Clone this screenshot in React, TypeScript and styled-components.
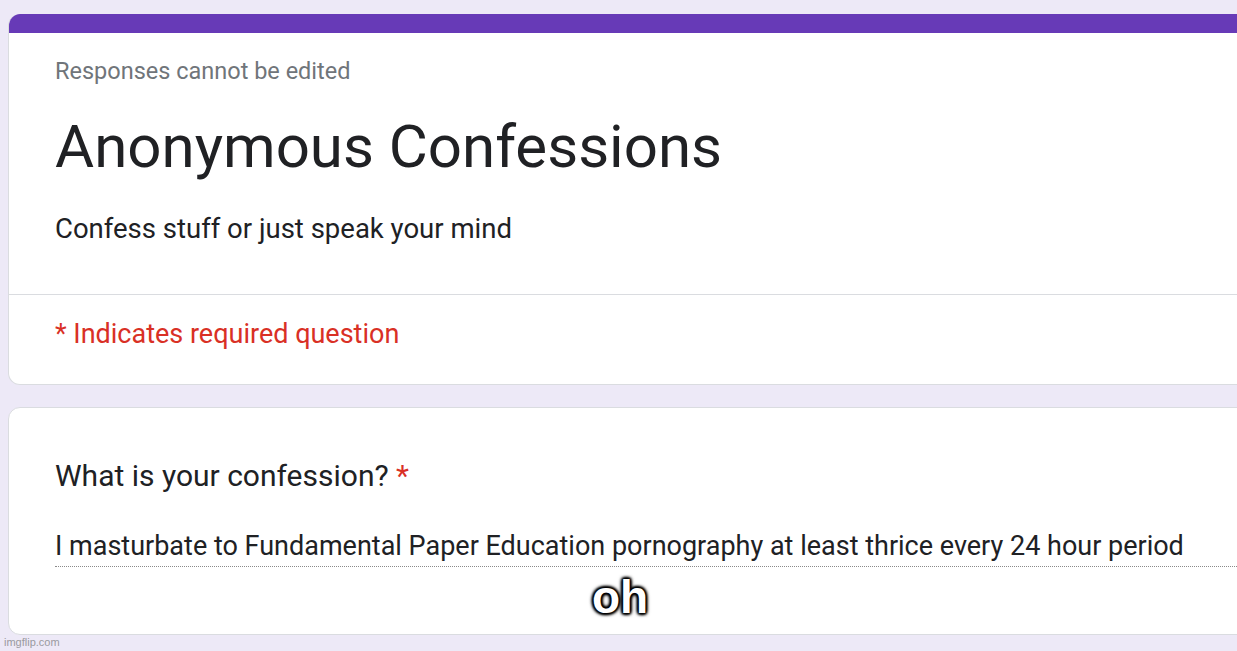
import React from 'react'
import styled, { createGlobalStyle } from 'styled-components';

const GlobalStyle = createGlobalStyle`
  html, body {
    margin: 0;
    padding: 0;
    background: #ede9f7;
    overflow: hidden;
  }
  body {
    font-family: Roboto, "Liberation Sans", Arial, sans-serif;
  }
`;

const App = () => {
  return (
    <>
      <GlobalStyle />
      <Page>
        <HeaderCard>
          <AccentBar />
          <HeaderBody>
            <Notice>Responses cannot be edited</Notice>
            <Title>Anonymous Confessions</Title>
            <Description>Confess stuff or just speak your mind</Description>
          </HeaderBody>
          <Divider />
          <RequiredNote>* Indicates required question</RequiredNote>
        </HeaderCard>
        <QuestionCard>
          <QuestionTitle>
            What is your confession? <Star>*</Star>
          </QuestionTitle>
          <Answer>
            I masturbate to Fundamental Paper Education pornography at least thrice every 24 hour period
          </Answer>
          <Caption>oh</Caption>
        </QuestionCard>
        <Watermark>imgflip.com</Watermark>
      </Page>
    </>
  )
}

const Page = styled.div`
  width: 1237px;
  height: 651px;
  padding: 14px 0 0 8px;
  box-sizing: border-box;
  display: flex;
  flex-direction: column;
  gap: 22px;
  position: relative;
`;

const Card = styled.div`
  width: 1260px;
  background: #fff;
  border: 1px solid #dadce0;
  border-radius: 12px;
  box-sizing: border-box;
  overflow: hidden;
`;

const HeaderCard = styled(Card)`
  height: 371px;
  border-top: none;
`;

const AccentBar = styled.div`
  height: 19px;
  background: #673ab7;
`;

const HeaderBody = styled.div`
  padding: 25px 46px 0;
  height: 261px;
  box-sizing: border-box;
`;

const Notice = styled.div`
  font-size: 23.5px;
  color: #70757a;
  line-height: 26px;
`;

const Title = styled.h1`
  margin: 27px 0 0;
  font-size: 60px;
  font-weight: 400;
  line-height: 72px;
  color: #202124;
`;

const Description = styled.div`
  margin-top: 30px;
  font-size: 27.5px;
  line-height: 32px;
  color: #202124;
`;

const Divider = styled.div`
  height: 1px;
  background: #dadce0;
`;

const RequiredNote = styled.div`
  padding: 24px 46px 0;
  font-size: 27px;
  line-height: 30px;
  color: #d93025;
`;

const QuestionCard = styled(Card)`
  height: 228px;
  padding: 50px 0 0 46px;
  position: relative;
`;

const QuestionTitle = styled.div`
  font-size: 30px;
  line-height: 36px;
  color: #202124;
`;

const Star = styled.span`
  color: #d93025;
`;

const Answer = styled.div`
  margin-top: 36px;
  padding-bottom: 4px;
  font-size: 27px;
  line-height: 32px;
  color: #202124;
  border-bottom: 1px dotted #8a8a8a;
  white-space: nowrap;
`;

const Caption = styled.div`
  position: absolute;
  left: 583px;
  top: 163px;
  font-family: "Liberation Sans", Arial, sans-serif;
  font-weight: 700;
  font-size: 46px;
  line-height: 52px;
  color: #fff;
  text-shadow:
    0 0 2px #000, 0 0 3px #000, 0 0 4px #000, 0 0 5px #000,
    1px 1px 3px #000, -1px -1px 3px #000, 1px -1px 3px #000, -1px 1px 3px #000;
`;

const Watermark = styled.div`
  position: absolute;
  left: 4px;
  bottom: 3px;
  font-family: "Liberation Sans", Arial, sans-serif;
  font-size: 11px;
  color: #9a9aa0;
`;

export default App
